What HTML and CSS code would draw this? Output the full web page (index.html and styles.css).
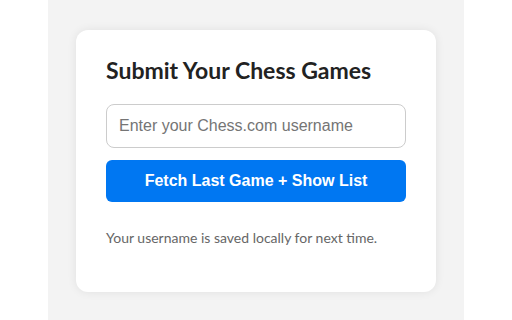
FILE: index.html
```html
<!DOCTYPE html>
<html>
<head>
<meta charset="utf-8">
<link rel="stylesheet" href="styles.css">
</head>
<body>
<div class="page">
  <div class="card">
    <h2 class="title">Submit Your Chess Games</h2>
    <input class="username" type="text" placeholder="Enter your Chess.com username">
    <button class="fetch">Fetch Last Game + Show List</button>
    <p class="note">Your username is saved locally for next time.</p>
  </div>
</div>
</body>
</html>
```
FILE: styles.css
```css
html, body {
  margin: 0;
  padding: 0;
  background: #ffffff;
  height: 100%;
}
.page {
  width: 416px;
  min-height: 320px;
  margin: 0 0 0 48px;
  background: #f3f3f3;
  padding-top: 30px;
  box-sizing: border-box;
  font-family: Lato, "Open Sans", sans-serif;
}
.card {
  width: 360px;
  margin: 0 auto;
  background: #ffffff;
  border-radius: 12px;
  box-shadow: 0 0 10px rgba(0, 0, 0, 0.08);
  padding: 24px 30px 30px;
  box-sizing: border-box;
  height: 262px;
  display: flex;
  flex-direction: column;
}
.title {
  margin: 0 0 18px;
  font-size: 23px;
  font-weight: 700;
  color: #222222;
  line-height: 32px;
}
.username {
  width: 300px;
  height: 44px;
  box-sizing: border-box;
  border: 1px solid #cccccc;
  border-radius: 8px;
  padding: 0 12px;
  font-family: "Liberation Sans", Arial, sans-serif;
  font-size: 16px;
  color: #333;
  outline: none;
}
.username::placeholder {
  color: #757575;
}
.fetch {
  margin-top: 12px;
  width: 300px;
  height: 42px;
  border: none;
  border-radius: 6px;
  background: #0077f2;
  color: #ffffff;
  font-family: "Liberation Sans", Arial, sans-serif;
  font-size: 16px;
  font-weight: 700;
}
.note {
  margin: 26px 0 0;
  font-size: 14px;
  color: #666666;
  line-height: 20px;
}
```
